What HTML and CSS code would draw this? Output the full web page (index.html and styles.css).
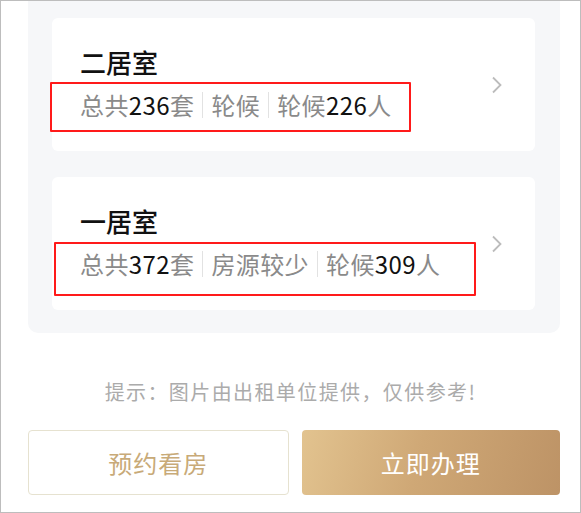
FILE: index.html
```html
<!DOCTYPE html>
<html lang="zh-CN">
<head>
    <meta charset="UTF-8">
    <meta name="viewport" content="width=device-width, initial-scale=1.0">
    <title>户型</title>
    <link rel="stylesheet" href="styles.css">
</head>
<body>
    <div class="screen">
        <div class="room-list">
            <div class="room-card">
                <div class="room-info">
                    <div class="room-name">二居室</div>
                    <div class="room-stats">
                        <span>总共<b>236</b>套</span>
                        <i class="sep"></i>
                        <span>轮候</span>
                        <i class="sep"></i>
                        <span>轮候<b>226</b>人</span>
                    </div>
                </div>
                <svg class="arrow" width="12" height="18" viewBox="0 0 12 18">
                    <polyline points="2,1.5 9.5,9 2,16.5" fill="none" stroke="#bcbcbc" stroke-width="1.8"/>
                </svg>
                <span class="mark mark-one"></span>
            </div>
            <div class="room-card">
                <div class="room-info">
                    <div class="room-name">一居室</div>
                    <div class="room-stats">
                        <span>总共<b>372</b>套</span>
                        <i class="sep"></i>
                        <span>房源较少</span>
                        <i class="sep"></i>
                        <span>轮候<b>309</b>人</span>
                    </div>
                </div>
                <svg class="arrow" width="12" height="18" viewBox="0 0 12 18">
                    <polyline points="2,1.5 9.5,9 2,16.5" fill="none" stroke="#bcbcbc" stroke-width="1.8"/>
                </svg>
                <span class="mark mark-two"></span>
            </div>
        </div>

        <p class="tip">提示：图片由出租单位提供，仅供参考!</p>

        <div class="actions">
            <button class="btn btn-outline">预约看房</button>
            <button class="btn btn-gold">立即办理</button>
        </div>
    </div>
</body>
</html>
```

FILE: styles.css
```css
body {
    margin: 0;
    padding: 0;
    background-color: #ffffff;
    font-family: "Noto Sans CJK SC", "Noto Sans", sans-serif;
}

.screen {
    width: 581px;
    height: 513px;
    box-sizing: border-box;
    border: 1px solid #bdbdbd;
    background-color: #ffffff;
    overflow: hidden;
}

.room-list {
    margin: 0 20px 0 27px;
    padding: 17px 25px 23px 24px;
    background-color: #f6f7f9;
    border-radius: 0 0 10px 10px;
    display: flex;
    flex-direction: column;
    gap: 26px;
}

.room-card {
    position: relative;
    height: 133px;
    box-sizing: border-box;
    padding: 28px 32px 0 28px;
    background-color: #ffffff;
    border-radius: 6px;
    display: flex;
    align-items: center;
}

.room-info {
    flex: 1;
    align-self: flex-start;
}

.room-name {
    font-size: 26px;
    line-height: 32px;
    font-weight: 500;
    color: #111111;
}

.room-stats {
    margin-top: 11px;
    display: flex;
    align-items: center;
    font-size: 24px;
    line-height: 32px;
    letter-spacing: 0.4px;
    color: #8a8a8a;
}

.room-stats b {
    font-weight: 400;
    color: #111111;
}

.sep {
    width: 1px;
    height: 26px;
    margin: 0 8px;
    background-color: #e2e2e2;
}

.arrow {
    margin-top: -28px;
}

/* red annotation frames drawn over the stats */
.mark {
    position: absolute;
    border: 2px solid #ff1a1a;
    border-radius: 1px;
}

.mark-one {
    left: -2px;
    top: 64px;
    width: 357px;
    height: 46px;
}

.mark-two {
    left: 2px;
    top: 65px;
    width: 418px;
    height: 50px;
}

.tip {
    margin: 45px 0 0;
    text-align: center;
    font-size: 20px;
    line-height: 28px;
    letter-spacing: 1.4px;
    color: #ababab;
}

.actions {
    margin: 24px 20px 0 27px;
    display: flex;
    gap: 13px;
}

.btn {
    flex: 1;
    height: 65px;
    border-radius: 4px;
    font-family: inherit;
    font-size: 24px;
    letter-spacing: 1px;
    cursor: pointer;
}

.btn-outline {
    background-color: #ffffff;
    border: 1px solid #e6e2d0;
    color: #c8aa78;
}

.btn-gold {
    border: none;
    color: #ffffff;
    background: linear-gradient(105deg, #e2c38f 0%, #cfa876 45%, #bd9366 100%);
}
```
